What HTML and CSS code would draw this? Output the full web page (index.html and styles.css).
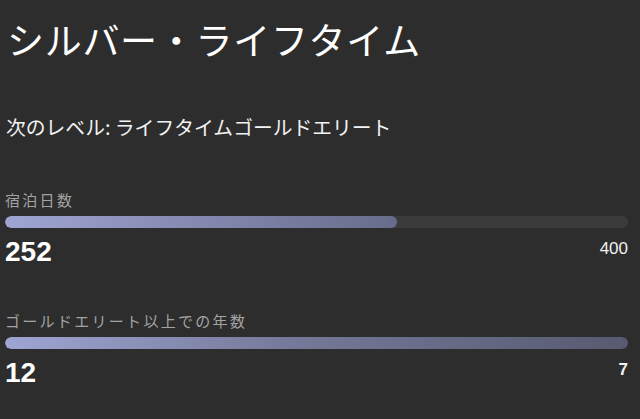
FILE: index.html
```html
<!DOCTYPE html>
<html lang="ja">
<head>
<meta charset="utf-8">
<link rel="stylesheet" href="styles.css">
</head>
<body>
<div class="page">
  <h1 class="title">シルバー・ライフタイム</h1>
  <p class="next">次のレベル: ライフタイムゴールドエリート</p>
  <section class="stat stat-first">
    <div class="label">宿泊日数</div>
    <div class="track"><div class="fill fill-partial" style="width: 63%"></div></div>
    <div class="row">
      <span class="value">252</span>
      <span class="max">400</span>
    </div>
  </section>
  <section class="stat stat-second">
    <div class="label">ゴールドエリート以上での年数</div>
    <div class="track"><div class="fill fill-full" style="width: 100%"></div></div>
    <div class="row">
      <span class="value">12</span>
      <span class="max max-bold">7</span>
    </div>
  </section>
</div>
</body>
</html>
```

FILE: styles.css
```css
html, body {
  margin: 0;
  padding: 0;
  background: #2d2d2d;
  height: 100%;
}
body {
  font-family: "Noto Sans CJK JP", "Noto Sans", sans-serif;
  color: #ffffff;
}
.page {
  padding: 17px 12px 0 5px;
}
.title {
  margin: 0 0 0 2px;
  font-size: 37px;
  line-height: 44px;
  font-weight: 400;
  letter-spacing: 0.7px;
}
.next {
  margin: 52px 0 0 1px;
  font-size: 19.8px;
  line-height: 28px;
  font-weight: 400;
  color: #f2f2f2;
}
.stat-first {
  margin-top: 49px;
}
.stat-second {
  margin-top: 43px;
}
.label {
  font-size: 15px;
  line-height: 20px;
  letter-spacing: 2.3px;
  color: #a3a3a3;
}
.track {
  margin-top: 6px;
  height: 12px;
  border-radius: 6px;
  background: #3b3b3c;
  overflow: hidden;
}
.fill {
  height: 100%;
  border-radius: 6px;
}
.fill-partial {
  background: linear-gradient(90deg, #9fa5d3 0%, #686c8b 100%);
}
.fill-full {
  background: linear-gradient(90deg, #9fa5d3 0%, #767a9a 45%, #575a70 100%);
}
.row {
  margin-top: 8px;
  display: flex;
  justify-content: space-between;
  align-items: flex-start;
  font-family: "Liberation Sans", Arial, sans-serif;
}
.value {
  font-size: 28px;
  line-height: 32px;
  font-weight: 700;
  color: #ffffff;
}
.max {
  margin-top: 3px;
  font-size: 17px;
  line-height: 20px;
  font-weight: 400;
  color: #f0f0f0;
}
.max-bold {
  font-weight: 700;
}
```
